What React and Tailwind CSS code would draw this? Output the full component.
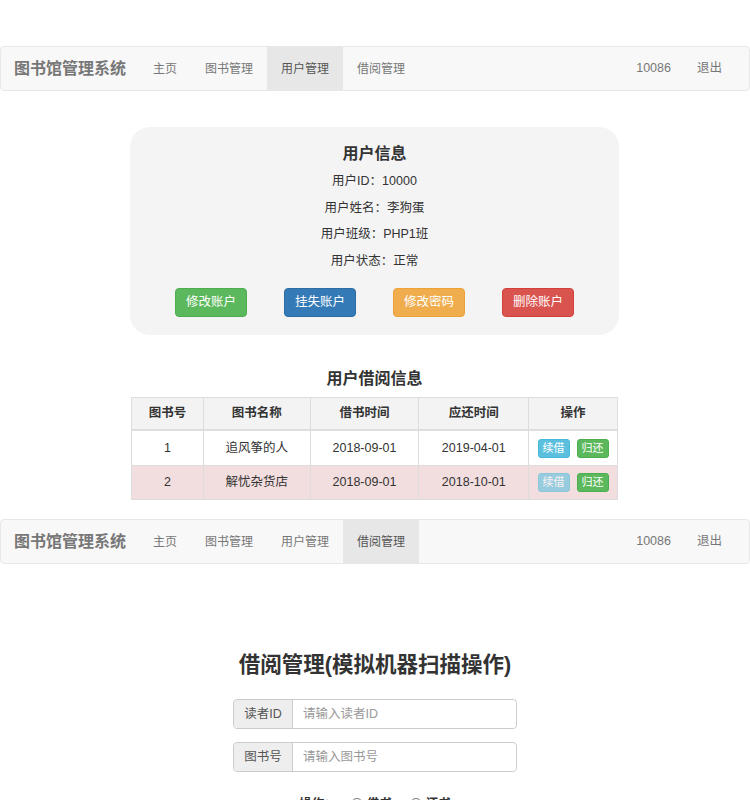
const font = { fontFamily: '"Liberation Sans", "Noto Sans CJK SC", sans-serif' };

const navItems = ["主页", "图书管理", "用户管理", "借阅管理"];

function Navbar({ active }) {
  return (
    <div className="flex h-[45px] items-stretch rounded-[4px] border border-[#e7e7e7] bg-[#f8f8f8] text-[#777]">
      <div className="flex items-center pl-[13px] pr-[13px] text-[16px] font-bold">图书馆管理系统</div>
      {navItems.map((item) => (
        <div
          key={item}
          className={`flex items-center px-[14px] text-[12px] ${item === active ? "bg-[#e7e7e7] text-[#555]" : ""}`}
        >
          {item}
        </div>
      ))}
      <div className="flex-1" />
      <div className="flex items-center px-[13px] text-[12.5px]">10086</div>
      <div className="flex items-center pl-[13px] pr-[27px] text-[12.5px]">退出</div>
    </div>
  );
}

const infoLines = ["用户ID：10000", "用户姓名：李狗蛋", "用户班级：PHP1班", "用户状态：正常"];

const actions = [
  { label: "修改账户", cls: "bg-[#5cb85c] border-[#4cae4c]" },
  { label: "挂失账户", cls: "bg-[#337ab7] border-[#2e6da4]" },
  { label: "修改密码", cls: "bg-[#f0ad4e] border-[#eea236]" },
  { label: "删除账户", cls: "bg-[#d9534f] border-[#d43f3a]" },
];

const columns = [
  { title: "图书号", w: "w-[72px]" },
  { title: "图书名称", w: "w-[107px]" },
  { title: "借书时间", w: "w-[109px]" },
  { title: "应还时间", w: "w-[110px]" },
  { title: "操作", w: "w-[89px]" },
];

const rows = [
  { id: "1", name: "追风筝的人", from: "2018-09-01", to: "2019-04-01", bg: "bg-white", h: "h-[35px]", disabled: false },
  { id: "2", name: "解忧杂货店", from: "2018-09-01", to: "2018-10-01", bg: "bg-[#f2dede]", h: "h-[34px]", disabled: true },
];

function UserInfoCard() {
  return (
    <div className="ml-[130px] mt-[36px] w-[489px] rounded-[20px] bg-[#f4f4f4] pb-[18px] pt-[16px] text-center text-[#333]">
      <div className="h-[22px] text-[16px] font-bold leading-[22px]">用户信息</div>
      <div className="mt-[3px]">
        {infoLines.map((line) => (
          <div key={line} className="text-[12.5px] leading-[26.5px]">
            {line}
          </div>
        ))}
      </div>
      <div className="mt-[14px] flex justify-between px-[45px]">
        {actions.map((a) => (
          <button
            key={a.label}
            type="button"
            className={`h-[29px] w-[72px] rounded-[4px] border text-[12.5px] text-white ${a.cls}`}
          >
            {a.label}
          </button>
        ))}
      </div>
    </div>
  );
}

function BorrowTable() {
  return (
    <div className="ml-[131px] w-[487px] text-[#333]">
      <div className="mt-[32px] h-[24px] text-center text-[16px] font-bold leading-[24px]">用户借阅信息</div>
      <div className="mt-[6px] border-l border-t border-[#ddd]">
        <div className="flex h-[33px] border-b-2 border-[#ddd] bg-[#f3f3f3] text-[12.5px] font-bold">
          {columns.map((c) => (
            <div key={c.title} className={`flex items-center justify-center border-r border-[#ddd] ${c.w}`}>
              {c.title}
            </div>
          ))}
        </div>
        {rows.map((r) => (
          <div key={r.id} className={`flex border-b border-[#ddd] text-[12.5px] ${r.bg} ${r.h}`}>
            <div className="flex w-[72px] items-center justify-center border-r border-[#ddd]">{r.id}</div>
            <div className="flex w-[107px] items-center justify-center border-r border-[#ddd]">{r.name}</div>
            <div className="flex w-[109px] items-center justify-center border-r border-[#ddd]">{r.from}</div>
            <div className="flex w-[110px] items-center justify-center border-r border-[#ddd]">{r.to}</div>
            <div className="flex w-[89px] items-center justify-center gap-[7px] border-r border-[#ddd]">
              <span
                className={`flex h-[19px] w-[32px] items-center justify-center rounded-[3px] border border-[#46b8da] bg-[#5bc0de] text-[11px] text-white ${r.disabled ? "opacity-60" : ""}`}
              >
                续借
              </span>
              <span className="flex h-[19px] w-[32px] items-center justify-center rounded-[3px] border border-[#4cae4c] bg-[#5cb85c] text-[11px] text-white">
                归还
              </span>
            </div>
          </div>
        ))}
      </div>
    </div>
  );
}

function InputGroup({ label, placeholder }) {
  return (
    <div className="flex h-[30px] w-[284px] rounded-[4px] border border-[#ccc] shadow-[inset_0_1px_1px_rgba(0,0,0,0.075)]">
      <div className="flex w-[59px] items-center justify-center rounded-l-[4px] border-r border-[#ccc] bg-[#eee] text-[12.5px] text-[#555]">
        {label}
      </div>
      <input
        className="min-w-0 flex-1 rounded-r-[4px] bg-white px-[10px] text-[12.5px] text-[#555] outline-none placeholder:text-[#999]"
        placeholder={placeholder}
        style={font}
      />
    </div>
  );
}

function BorrowManage() {
  return (
    <div className="flex flex-col items-center text-[#333]">
      <div className="mt-[86px] h-[30px] text-[21.5px] font-bold leading-[30px]">借阅管理(模拟机器扫描操作)</div>
      <div className="mt-[19px]">
        <InputGroup label="读者ID" placeholder="请输入读者ID" />
      </div>
      <div className="mt-[13px]">
        <InputGroup label="图书号" placeholder="请输入图书号" />
      </div>
      <div className="mt-[22px] flex h-[20px] items-center text-[12.5px] font-bold">
        <span>操作：</span>
        <label className="ml-[14px] flex items-center gap-[4px]">
          <input type="radio" name="op" className="h-[12px] w-[12px]" />
          借书
        </label>
        <label className="ml-[18px] flex items-center gap-[4px]">
          <input type="radio" name="op" className="h-[12px] w-[12px]" />
          还书
        </label>
      </div>
      <div className="h-[60px]" />
    </div>
  );
}

export default function App() {
  return (
    <div className="min-h-screen w-[750px] bg-white" style={font}>
      <div className="pt-[46px]">
        <Navbar active="用户管理" />
      </div>
      <UserInfoCard />
      <BorrowTable />
      <div className="mt-[19px]">
        <Navbar active="借阅管理" />
      </div>
      <BorrowManage />
    </div>
  );
}
